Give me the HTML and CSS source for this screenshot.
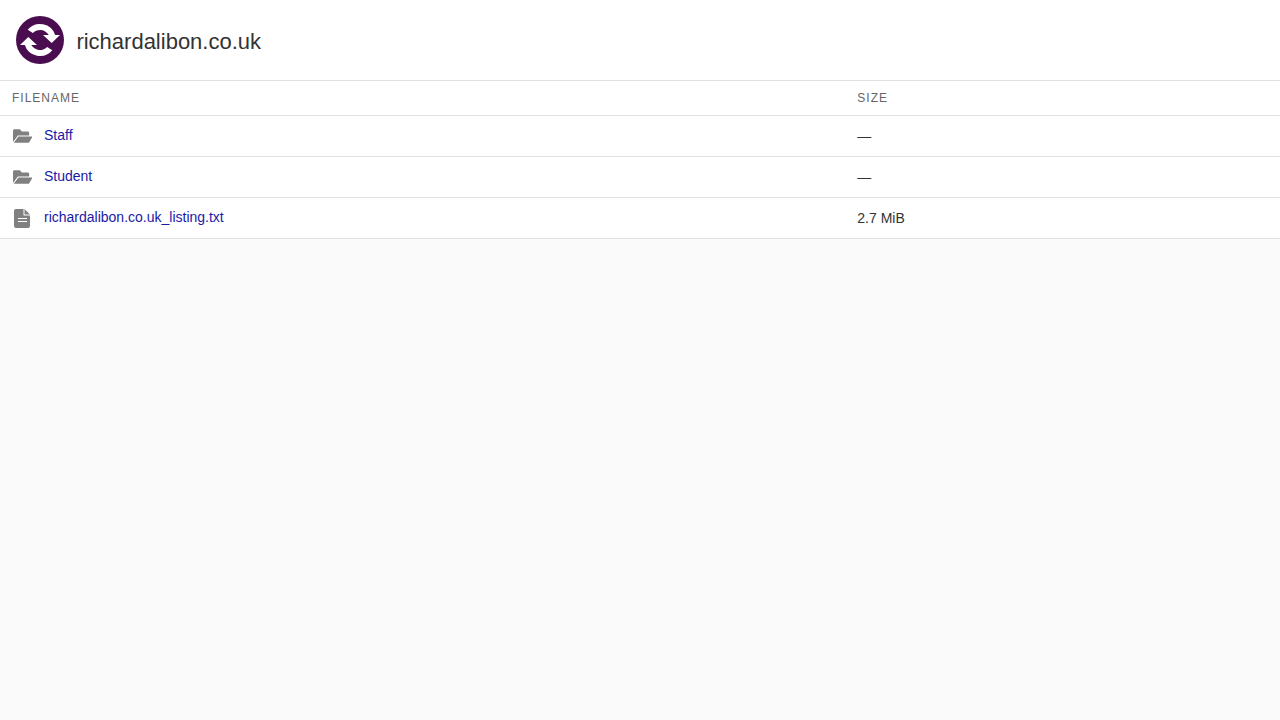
FILE: index.html
```html
<!DOCTYPE html>
<html lang="en">

<head>
  <meta charset="UTF-8">
  <title>richardalibon.co.uk</title>
  <meta name="viewport" content="width=device-width, initial-scale=1">
  <link rel="stylesheet" href="styles.css">
</head>

<body>
  <header class="site-header">
    <svg class="logo" viewBox="0 0 48 48" aria-hidden="true">
      <circle cx="24" cy="24" r="24" fill="#4a0d50" />
      <path fill="#fff" d="M11.700 13.700A16 16 0 0 1 39.200 19H44L35.700 27 27 19H32.700A10 10 0 0 0 16.900 17Z" />
      <path fill="#fff" transform="rotate(180 24 24)" d="M11.700 13.700A16 16 0 0 1 39.200 19H44L35.700 27 27 19H32.700A10 10 0 0 0 16.900 17Z" />
    </svg>
    <h1 class="site-title">richardalibon.co.uk</h1>
  </header>

  <table class="listing">
    <thead>
      <tr>
        <th class="col-name">Filename</th>
        <th>Size</th>
      </tr>
    </thead>
    <tbody>
      <tr>
        <td>
          <div class="entry">
            <svg class="icon" viewBox="0 0 20 14" aria-hidden="true">
              <path d="M0 1.500C0 .7.7 0 1.500 0h5.500l2 2.500h6c.8 0 1.500.7 1.500 1.500V6.500H5L0 13Z" />
              <path d="M5.500 7.500H20l-3.300 5.500c-.3.600-.8 1-1.500 1H.8Z" />
            </svg>
            <a href="#">Staff</a>
          </div>
        </td>
        <td>—</td>
      </tr>
      <tr>
        <td>
          <div class="entry">
            <svg class="icon" viewBox="0 0 20 14" aria-hidden="true">
              <path d="M0 1.500C0 .7.7 0 1.500 0h5.500l2 2.500h6c.8 0 1.500.7 1.500 1.500V6.500H5L0 13Z" />
              <path d="M5.500 7.500H20l-3.300 5.500c-.3.600-.8 1-1.500 1H.8Z" />
            </svg>
            <a href="#">Student</a>
          </div>
        </td>
        <td>—</td>
      </tr>
      <tr>
        <td>
          <div class="entry">
            <svg class="icon-file" viewBox="0 0 16 19" aria-hidden="true">
              <path fill-rule="evenodd" d="M2 0h7.500v6.500H16V17a2 2 0 0 1-2 2H2a2 2 0 0 1-2-2V2a2 2 0 0 1 2-2Zm2 9v1h9V9Zm0 3v1h9v-1Z" />
              <path d="M10.500 0 16 5.500h-5.500Z" />
            </svg>
            <a href="#">richardalibon.co.uk_listing.txt</a>
          </div>
        </td>
        <td>2.7 MiB</td>
      </tr>
    </tbody>
  </table>
</body>

</html>
```

FILE: styles.css
```css
body {
  margin: 0;
  background: #fafafa;
  color: #333;
  font-family: "Liberation Sans", Arial, sans-serif;
  font-size: 14px;
}

.site-header {
  display: flex;
  align-items: center;
  gap: 12.400px;
  height: 80px;
  padding-left: 16px;
  background: #fff;
}

.logo {
  width: 48px;
  height: 48px;
}

.site-title {
  margin: 4px 0 0;
  font-size: 22px;
  font-weight: normal;
}

.listing {
  width: 100%;
  border-collapse: collapse;
  table-layout: fixed;
  background: #fff;
}

th,
td {
  padding: 0 12px;
  border-top: 1px solid #e0e0e0;
  border-bottom: 1px solid #e0e0e0;
  text-align: left;
}

th {
  height: 34px;
  color: #666;
  font-size: 12px;
  font-weight: normal;
  letter-spacing: 1px;
  text-transform: uppercase;
}

td {
  height: 40px;
}

.col-name {
  width: 821.300px;
}

.entry {
  display: flex;
  align-items: center;
  gap: 12px;
}

.icon {
  flex: none;
  width: 19.600px;
  height: 14px;
  margin: 0 -.3px 0 .7px;
  fill: #808080;
}

.icon-file {
  flex: none;
  width: 16px;
  height: 19px;
  margin: 0 2px;
  fill: #808080;
}

a {
  padding-bottom: 2px;
  color: #1a1aa6;
  text-decoration: none;
}
```
